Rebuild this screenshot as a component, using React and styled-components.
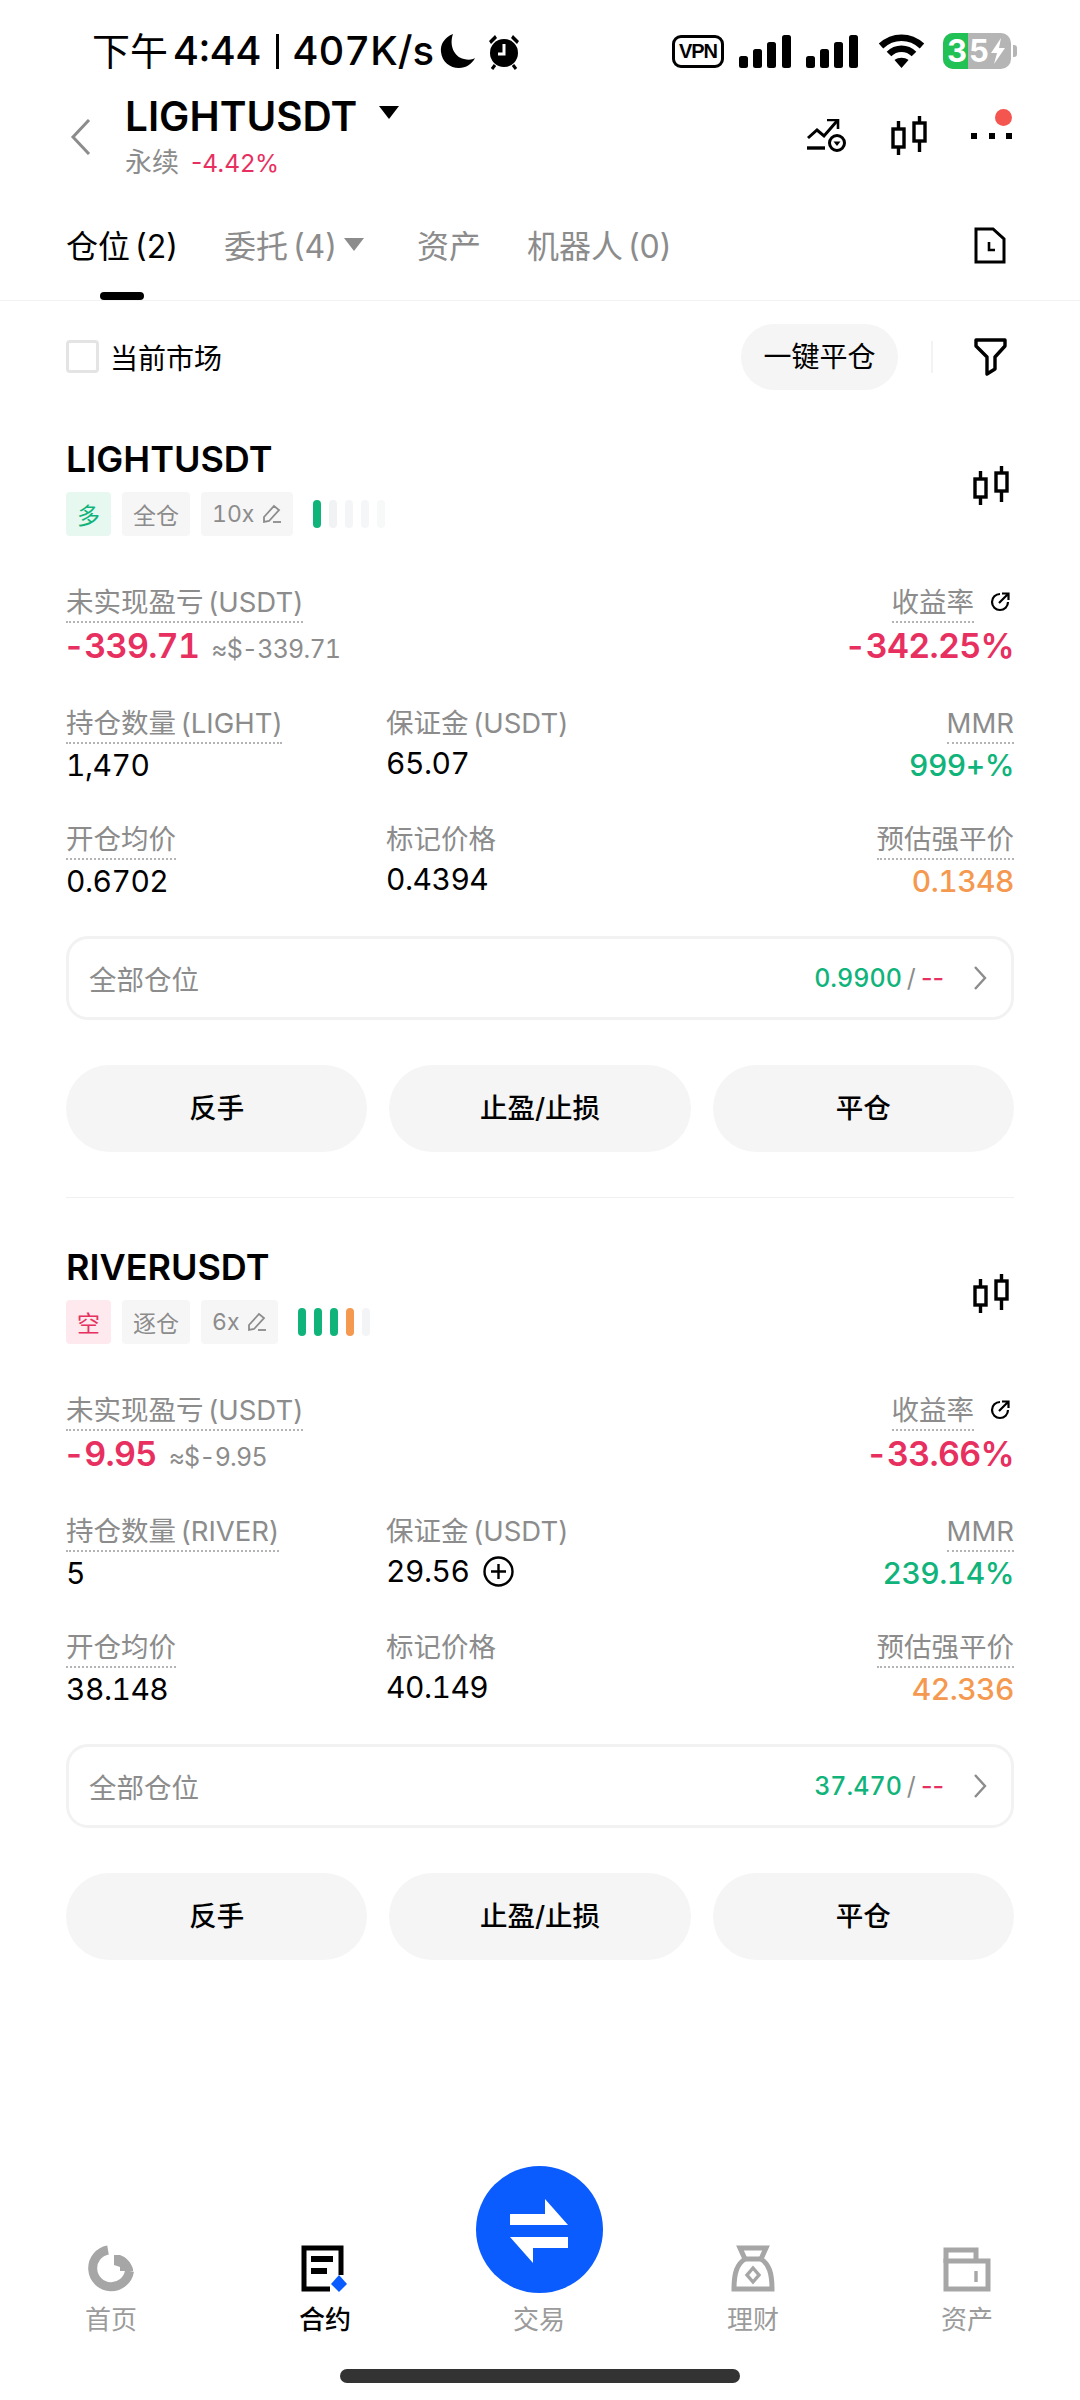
import React from 'react'
import styled, { createGlobalStyle } from 'styled-components'

const GREEN = '#10b47b'
const RED = '#e7305f'
const ORANGE = '#f4994f'
const GREY = '#8c8c8c'

const GlobalStyle = createGlobalStyle`
  html, body {
    margin: 0;
    padding: 0;
    background: #fff;
  }
  body {
    font-family: Inter, "Noto Sans CJK SC", "Liberation Sans", sans-serif;
    color: #000;
  }
  * {
    box-sizing: border-box;
  }
`

const Page = styled.div`
  width: 1080px;
  height: 2400px;
  display: flex;
  flex-direction: column;
  overflow: hidden;
  background: #fff;
`

const StatusBar = styled.div`
  height: 84px;
  padding: 18px 63px 0 92px;
  display: flex;
  align-items: center;
  justify-content: space-between;
`

const StatusLeft = styled.div`
  display: flex;
  align-items: center;
  font-size: 40px;
  font-weight: 500;
  font-variant-numeric: tabular-nums;
  line-height: 66px;
  white-space: nowrap;
`

const StatusCjk = styled.span`
  margin-right: 5px;
  font-size: 38px;
  font-weight: 400;
`

const StatusSep = styled.div`
  width: 3px;
  height: 35px;
  margin: 0 14px;
  background: #000;
`

const StatusIcons = styled.div`
  display: flex;
  align-items: center;
  gap: 15px;
`

const MoonIcons = styled.div`
  display: flex;
  align-items: center;
  gap: 12px;
  margin-left: 6px;
`

const Vpn = styled.div`
  width: 52px;
  height: 33px;
  border: 3px solid #000;
  border-radius: 9px;
  font-family: "Liberation Sans", sans-serif;
  font-size: 20px;
  font-weight: 700;
  line-height: 27px;
  text-align: center;
  letter-spacing: -1px;
`

const WifiBox = styled.div`
  display: flex;
  margin: 0 0 0 5px;
`

const Battery = styled.div`
  width: 68px;
  height: 36px;
  margin-left: 3px;
  border-radius: 10px;
  overflow: hidden;
  background: #b5b5b5;
  color: #fff;
  font-size: 31px;
  font-weight: 700;
  line-height: 36px;
  display: flex;
  align-items: center;
`

const BatteryFill = styled.div`
  width: 25px;
  height: 100%;
  background: #22c155;
  padding-left: 4px;
`

const BatteryRest = styled.div`
  padding: 0 2px 0 1px;
`

const BatteryNub = styled.div`
  width: 4px;
  height: 12px;
  margin-left: -13px;
  border-radius: 0 3px 3px 0;
  background: #b5b5b5;
`

const Header = styled.div`
  height: 106px;
  padding: 0 68px 0 70px;
  display: flex;
  align-items: center;
`

const TitleBlock = styled.div`
  margin-left: 33px;
  flex: 1;
`

const TitleRow = styled.div`
  display: flex;
  align-items: center;
  gap: 22px;
  font-size: 40.500px;
  font-weight: 600;
  line-height: 46px;
`

const Caret = styled.div`
  width: 0;
  height: 0;
  margin: ${props => props.$margin || '0'};
  border-left: 10px solid transparent;
  border-right: 10px solid transparent;
  border-top: 13px solid ${props => props.$color || '#000'};
`

const SubRow = styled.div`
  margin-top: 5px;
  display: flex;
  align-items: center;
  gap: 12px;
  font-size: 24.500px;
  line-height: 36px;
  color: ${RED};
`

const SubName = styled.span`
  font-size: 27px;
  color: ${GREY};
`

const HeaderIcons = styled.div`
  display: flex;
  align-items: center;
  gap: 44px;
  margin-top: -4px;
`

const DotsWrap = styled.div`
  position: relative;
  width: 41px;
  height: 40px;
  display: flex;
  align-items: center;
  justify-content: space-between;
`

const Dot = styled.div`
  width: 6px;
  height: 6px;
  margin-top: 2px;
  background: #000;
`

const RedBadge = styled.div`
  position: absolute;
  top: -6px;
  right: 0;
  width: 17px;
  height: 17px;
  border-radius: 50%;
  background: #f4564f;
`

const TabBar = styled.div`
  height: 111px;
  padding: 0 74px 0 66px;
  display: flex;
  align-items: center;
  gap: 46px;
  border-bottom: 1px solid #f3f3f3;
`

const Tab = styled.div`
  position: relative;
  height: 100%;
  padding-bottom: 2px;
  display: flex;
  align-items: center;
  gap: 7px;
  margin-right: ${props => props.$extra || 0}px;
  font-size: 32px;
  font-weight: 400;
  word-spacing: -4px;
  white-space: nowrap;
  color: ${props => (props.$active ? '#000' : GREY)};
`

const TabMark = styled.div`
  position: absolute;
  left: 50%;
  bottom: 0;
  width: 44px;
  height: 8px;
  margin-left: -22px;
  border-radius: 4px;
  background: #000;
`

const TabIcon = styled.div`
  margin-left: auto;
  display: flex;
`

const FilterRow = styled.div`
  height: 111px;
  padding: 0 73px 0 66px;
  display: flex;
  align-items: center;
`

const Check = styled.div`
  width: 33px;
  height: 33px;
  border: 3px solid #e4e4e4;
  border-radius: 4px;
`

const CheckLabel = styled.div`
  margin-left: 11px;
  font-size: 28px;
`

const CloseAll = styled.div`
  margin-left: auto;
  width: 157px;
  height: 66px;
  border-radius: 33px;
  background: #f5f5f5;
  font-size: 28px;
  line-height: 66px;
  text-align: center;
`

const VLine = styled.div`
  width: 2px;
  height: 32px;
  margin: 0 41px 0 33px;
  background: #f3f3f3;
`

const Card = styled.div`
  padding: 25px 66px 0 66px;
  height: 808px;
`

const CardHead = styled.div`
  display: flex;
  justify-content: space-between;
  align-items: center;
`

const CardIcon = styled.div`
  display: flex;
  margin: -3px 5px 0 0;
`

const CardName = styled.div`
  font-size: 36px;
  font-weight: 600;
  line-height: 44px;
`

const Tags = styled.div`
  margin-top: 11px;
  display: flex;
  align-items: center;
  gap: 11px;
`

const Tag = styled.div`
  height: 44px;
  padding: 0 11px;
  display: flex;
  align-items: center;
  gap: 8px;
  border-radius: 4px;
  font-size: 23px;
  font-variant-numeric: tabular-nums;
  color: ${props => props.$color || GREY};
  background: ${props => props.$bg || '#f6f6f6'};
`

const Bars = styled.div`
  margin-left: 9px;
  display: flex;
  gap: 8px;
`

const Bar = styled.div`
  width: 8px;
  height: 28px;
  border-radius: 4px;
  background: ${props => props.$color};
`

const Row = styled.div`
  display: grid;
  grid-template-columns: 320px 1fr 1fr;
  margin-top: ${props => props.$top}px;
  height: ${props => props.$height}px;
`

const Cell = styled.div`
  display: flex;
  flex-direction: column;
  align-items: ${props => (props.$right ? 'flex-end' : 'flex-start')};
  grid-column: ${props => props.$column || 'auto'};
`

const LabelLine = styled.div`
  display: flex;
  align-items: flex-start;
  gap: 15px;
  padding-right: 3px;
`

const Label = styled.div`
  font-size: 27.500px;
  line-height: 38px;
  word-spacing: -3px;
  color: ${GREY};
  white-space: nowrap;
  border-bottom: ${props => (props.$dotted ? '2px dotted #b4b4b4' : '0')};
`

const RefreshBox = styled.div`
  display: flex;
  margin-top: 8px;
`

const ValueLine = styled.div`
  margin-left: -3px;
  display: flex;
  align-items: baseline;
  gap: 12px;
`

const BigValue = styled.div`
  font-size: 34px;
  font-weight: 600;
  font-variant-numeric: tabular-nums;
  letter-spacing: -0.700px;
  line-height: 46px;
  color: ${RED};
`

const ApproxValue = styled.div`
  font-size: 25px;
  font-variant-numeric: tabular-nums;
  letter-spacing: -0.800px;
  color: ${GREY};
`

const Value = styled.div`
  display: flex;
  align-items: center;
  gap: 14px;
  font-size: 30px;
  font-weight: ${props => (props.$color ? 500 : 400)};
  font-variant-numeric: tabular-nums;
  letter-spacing: -0.500px;
  line-height: 42px;
  color: ${props => props.$color || '#000'};
`

const AllBox = styled.div`
  margin-top: 33px;
  height: 84px;
  padding: 0 24px 0 20px;
  display: flex;
  align-items: center;
  border: 3px solid #f2f2f2;
  border-radius: 22px;
`

const AllLabel = styled.div`
  font-size: 27.500px;
  color: ${GREY};
`

const AllRight = styled.div`
  margin-left: auto;
  display: flex;
  align-items: center;
  font-size: 25px;
  font-weight: 500;
  color: ${GREEN};
`

const AllPrice = styled.span`
  font-variant-numeric: tabular-nums;
`

const Slash = styled.span`
  margin: 0 5px;
  font-weight: 400;
  color: ${GREY};
`

const Dash = styled.span`
  margin-right: 29px;
  color: ${RED};
`

const Actions = styled.div`
  margin-top: 45px;
  display: grid;
  grid-template-columns: repeat(3, 1fr);
  gap: 22px;
`

const Action = styled.div`
  height: 87px;
  border-radius: 44px;
  background: #f5f5f5;
  font-size: 27.500px;
  font-weight: 500;
  line-height: 87px;
  text-align: center;
`

const Rule = styled.div`
  margin-top: 45px;
  height: 1px;
  background: #f0f0f0;
`

const Nav = styled.div`
  margin-top: auto;
  padding-left: 4px;
  display: grid;
  grid-template-columns: repeat(5, 214px);
  align-items: end;
`

const NavItem = styled.div`
  display: flex;
  flex-direction: column;
  align-items: center;
  gap: ${props => props.$gap || 10}px;
  font-size: 26px;
  font-weight: ${props => (props.$active ? 500 : 400)};
  line-height: 36px;
  color: ${props => (props.$active ? '#000' : '#9b9b9b')};
`

const SwapCircle = styled.div`
  width: 127px;
  height: 127px;
  border-radius: 50%;
  background: #0a5cff;
`

const HomeArea = styled.div`
  height: 62px;
  padding-top: 31px;
  display: flex;
  justify-content: center;
`

const HomeBar = styled.div`
  width: 400px;
  height: 14px;
  border-radius: 7px;
  background: #333;
`

const Candles = () => (
  <svg width="36" height="39" viewBox="0 0 36 39" fill="none" stroke="#000" strokeWidth="3.400">
    <rect x="2" y="13" width="11" height="18" />
    <path d="M7.500 5v8M7.500 31v8" />
    <rect x="23" y="7" width="11" height="18" />
    <path d="M28.500 0v7M28.500 25v11" />
  </svg>
)

const Signal = () => (
  <svg width="52" height="33" viewBox="0 0 52 33" fill="#000">
    <rect x="0" y="21" width="9" height="12" rx="2.500" />
    <rect x="14" y="14" width="9" height="19" rx="2.500" />
    <rect x="28" y="7" width="9" height="26" rx="2.500" />
    <rect x="43" y="0" width="9" height="33" rx="2.500" />
  </svg>
)

const Wifi = () => (
  <svg width="47" height="34" viewBox="0 0 47 34" fill="none" stroke="#000" strokeWidth="6.500">
    <path d="M3 12C15 1 32 1 44 12" />
    <path d="M11 20C18 13 29 13 36 20" />
    <path d="M23.500 34l-7-8c4-3 10-3 14 0z" fill="#000" stroke="none" />
  </svg>
)

const Bolt = () => (
  <svg width="14" height="26" viewBox="0 0 14 26" fill="#fff">
    <path d="M10 0L0 15h6l-3 11L14 10H8z" />
  </svg>
)

const Moon = () => (
  <svg width="36" height="36" viewBox="0 0 36 36" fill="#000">
    <path d="M13 1C5 4 0 11 1 19c1 10 9 16 18 16 7 0 13-4 16-10-3 2-7 2-11 1C14 24 9 12 13 1z" />
  </svg>
)

const Alarm = () => (
  <svg width="32" height="37" viewBox="0 0 32 37" fill="none">
    <circle cx="16" cy="20" r="14" fill="#000" />
    <path d="M16 11v10h-6" stroke="#fff" strokeWidth="3" />
    <path d="M1 8l6-6 2 3-6 6zM31 8l-6-6-2 3 6 6z" fill="#000" />
    <path d="M7 32l-3 4M25 32l3 4" stroke="#000" strokeWidth="3" />
  </svg>
)

const Back = () => (
  <svg width="22" height="36" viewBox="0 0 22 36" fill="none" stroke={GREY} strokeWidth="3">
    <path d="M19 1L3 18l16 17" />
  </svg>
)

const TrendAlert = () => (
  <svg width="40" height="33" viewBox="0 0 40 33" fill="none" stroke="#000" strokeWidth="3">
    <path d="M1 19l9-8 7 6L30 2" />
    <path d="M20 1h11v9" strokeWidth="2.600" />
    <path d="M0 29h18" strokeWidth="3.400" />
    <circle cx="30" cy="24" r="7.500" />
    <path d="M26.500 22.500h7L30 27z" fill="#000" stroke="none" />
  </svg>
)

const DocClock = () => (
  <svg width="32" height="37" viewBox="0 0 32 37" fill="none" stroke="#000" strokeWidth="3">
    <path d="M2 2h17l11 10v23H2z" />
    <path d="M15 15v8h6" strokeWidth="2.600" />
  </svg>
)

const Funnel = () => (
  <svg width="33" height="38" viewBox="0 0 33 38" fill="none" stroke="#000" strokeWidth="3.400" strokeLinejoin="round">
    <path d="M2 2h29v6L21 19v12l-8 5V19L2 8z" />
  </svg>
)

const Pencil = () => (
  <svg width="20" height="20" viewBox="0 0 20 20" fill="none" stroke={GREY} strokeWidth="1.800">
    <path d="M2 13L12 2l5 4L7 17l-5 1z" />
    <path d="M11 18h8" />
  </svg>
)

const Refresh = () => (
  <svg width="22" height="22" viewBox="0 0 22 22" fill="none" stroke="#000" strokeWidth="2.200">
    <path d="M11 3a8 8 0 1 0 8 8" />
    <path d="M10 12L19 3M13 2.500h6.500V9" />
  </svg>
)

const PlusCircle = () => (
  <svg width="31" height="31" viewBox="0 0 31 31" fill="none" stroke="#000" strokeWidth="2.400">
    <circle cx="15.500" cy="15.500" r="14" />
    <path d="M15.500 8v15M8 15.500h15" />
  </svg>
)

const Chevron = () => (
  <svg width="14" height="24" viewBox="0 0 14 24" fill="none" stroke={GREY} strokeWidth="2.400">
    <path d="M2 1l10 11L2 23" />
  </svg>
)

const HomeIcon = () => (
  <svg width="46" height="47" viewBox="0 0 46 47" fill="none">
    <path d="M20 5a18.500 18.500 0 1 0 21.500 21" stroke="#a6a6a6" strokeWidth="9" />
    <path d="M26 10h6c6 2 11 7 13 14v2H32v-4l-6-2z" fill="#a6a6a6" />
  </svg>
)

const ContractIcon = () => (
  <svg width="48" height="47" viewBox="0 0 48 47" fill="none">
    <path d="M40 30V3H3v41h26" stroke="#000" strokeWidth="5" />
    <rect x="10" y="11" width="22" height="6" fill="#000" />
    <rect x="10" y="23" width="16" height="6" fill="#000" />
    <path d="M38 30l8 9-8 8-8-8z" fill="#0a5cff" />
  </svg>
)

const SwapIcon = () => (
  <svg width="127" height="127" viewBox="0 0 127 127" fill="#fff">
    <polygon points="34,48 69,48 69,33 92,59 34,59" />
    <polygon points="34,71 92,71 92,82 57,82 57,97" />
  </svg>
)

const BagIcon = () => (
  <svg width="44" height="47" viewBox="0 0 44 47" fill="none" stroke="#a6a6a6" strokeWidth="5">
    <path d="M9 3h26l-5 11c8 5 11 14 11 30H3c0-16 3-25 11-30z" />
    <path d="M14 14h16" />
    <path d="M22 23l6 7-6 7-6-7z" strokeWidth="3.400" />
  </svg>
)

const WalletIcon = () => (
  <svg width="48" height="45" viewBox="0 0 48 45" fill="none" stroke="#a6a6a6" strokeWidth="5">
    <path d="M3 16V3h30v13" />
    <rect x="3" y="14" width="42" height="28" />
    <path d="M33 24v11" strokeWidth="3.400" />
  </svg>
)

const Position = ({ data }) => (
  <Card>
    <CardHead>
      <div>
        <CardName>{data.name}</CardName>
        <Tags>
          <Tag $color={data.sideColor} $bg={data.sideBg}>{data.side}</Tag>
          <Tag>{data.mode}</Tag>
          <Tag>{data.leverage}<Pencil /></Tag>
          <Bars>
            {data.bars.map((color, i) => <Bar key={i} $color={color} />)}
          </Bars>
        </Tags>
      </div>
      <CardIcon><Candles /></CardIcon>
    </CardHead>

    <Row $top={47} $height={85}>
      <Cell $column="1 / 3">
        <Label $dotted>未实现盈亏 (USDT)</Label>
        <ValueLine>
          <BigValue>{data.pnl}</BigValue>
          <ApproxValue>{data.approx}</ApproxValue>
        </ValueLine>
      </Cell>
      <Cell $right>
        <LabelLine>
          <Label $dotted>收益率</Label>
          <RefreshBox><Refresh /></RefreshBox>
        </LabelLine>
        <BigValue>{data.roe}</BigValue>
      </Cell>
    </Row>

    <Row $top={36} $height={83}>
      <Cell>
        <Label $dotted>持仓数量 ({data.coin})</Label>
        <Value>{data.size}</Value>
      </Cell>
      <Cell>
        <Label>保证金 (USDT)</Label>
        <Value>{data.margin}{data.canAdd && <PlusCircle />}</Value>
      </Cell>
      <Cell $right>
        <Label $dotted>MMR</Label>
        <Value $color={GREEN}>{data.mmr}</Value>
      </Cell>
    </Row>

    <Row $top={33} $height={83}>
      <Cell>
        <Label $dotted>开仓均价</Label>
        <Value>{data.entry}</Value>
      </Cell>
      <Cell>
        <Label>标记价格</Label>
        <Value>{data.mark}</Value>
      </Cell>
      <Cell $right>
        <Label $dotted>预估强平价</Label>
        <Value $color={ORANGE}>{data.liq}</Value>
      </Cell>
    </Row>

    <AllBox>
      <AllLabel>全部仓位</AllLabel>
      <AllRight>
        <AllPrice>{data.tp}</AllPrice><Slash>/</Slash><Dash>--</Dash>
        <Chevron />
      </AllRight>
    </AllBox>

    <Actions>
      <Action>反手</Action>
      <Action>止盈/止损</Action>
      <Action>平仓</Action>
    </Actions>

    {data.rule && <Rule />}
  </Card>
)

const positions = [
  {
    name: 'LIGHTUSDT', coin: 'LIGHT', side: '多', sideColor: GREEN, sideBg: '#e7f8f1', mode: '全仓', leverage: '10x',
    bars: [GREEN, '#f1f2f3', '#f4f5f6', '#f5f6f7', '#f7f8f8'],
    pnl: '-339.71', approx: '≈$-339.71', roe: '-342.25%', size: '1,470', margin: '65.07', mmr: '999+%',
    entry: '0.6702', mark: '0.4394', liq: '0.1348', tp: '0.9900', rule: true,
  },
  {
    name: 'RIVERUSDT', coin: 'RIVER', side: '空', sideColor: RED, sideBg: '#fde9ee', mode: '逐仓', leverage: '6x',
    bars: [GREEN, GREEN, GREEN, ORANGE, '#f3f4f5'],
    pnl: '-9.95', approx: '≈$-9.95', roe: '-33.66%', size: '5', margin: '29.56', canAdd: true, mmr: '239.14%',
    entry: '38.148', mark: '40.149', liq: '42.336', tp: '37.470',
  },
]

export default function App() {
  return (
    <Page>
      <GlobalStyle />
      <StatusBar>
        <StatusLeft>
          <StatusCjk>下午</StatusCjk>4:44<StatusSep />407K/s
          <MoonIcons><Moon /><Alarm /></MoonIcons>
        </StatusLeft>
        <StatusIcons>
          <Vpn>VPN</Vpn>
          <Signal />
          <Signal />
          <WifiBox><Wifi /></WifiBox>
          <Battery>
            <BatteryFill>3</BatteryFill>
            <BatteryRest>5</BatteryRest>
            <Bolt />
          </Battery>
          <BatteryNub />
        </StatusIcons>
      </StatusBar>

      <Header>
        <Back />
        <TitleBlock>
          <TitleRow>LIGHTUSDT<Caret $margin="-8px 0 0" /></TitleRow>
          <SubRow><SubName>永续</SubName>-4.42%</SubRow>
        </TitleBlock>
        <HeaderIcons>
          <TrendAlert />
          <Candles />
          <DotsWrap>
            <Dot /><Dot /><Dot />
            <RedBadge />
          </DotsWrap>
        </HeaderIcons>
      </Header>

      <TabBar>
        <Tab $active>仓位 (2)<TabMark /></Tab>
        <Tab $extra={7}>委托 (4)<Caret $color={GREY} /></Tab>
        <Tab>资产</Tab>
        <Tab>机器人 (0)</Tab>
        <TabIcon><DocClock /></TabIcon>
      </TabBar>

      <FilterRow>
        <Check />
        <CheckLabel>当前市场</CheckLabel>
        <CloseAll>一键平仓</CloseAll>
        <VLine />
        <Funnel />
      </FilterRow>

      {positions.map(p => <Position key={p.name} data={p} />)}

      <Nav>
        <NavItem><HomeIcon />首页</NavItem>
        <NavItem $active><ContractIcon />合约</NavItem>
        <NavItem $gap={9}><SwapCircle><SwapIcon /></SwapCircle>交易</NavItem>
        <NavItem><BagIcon />理财</NavItem>
        <NavItem><WalletIcon />资产</NavItem>
      </Nav>
      <HomeArea><HomeBar /></HomeArea>
    </Page>
  )
}
